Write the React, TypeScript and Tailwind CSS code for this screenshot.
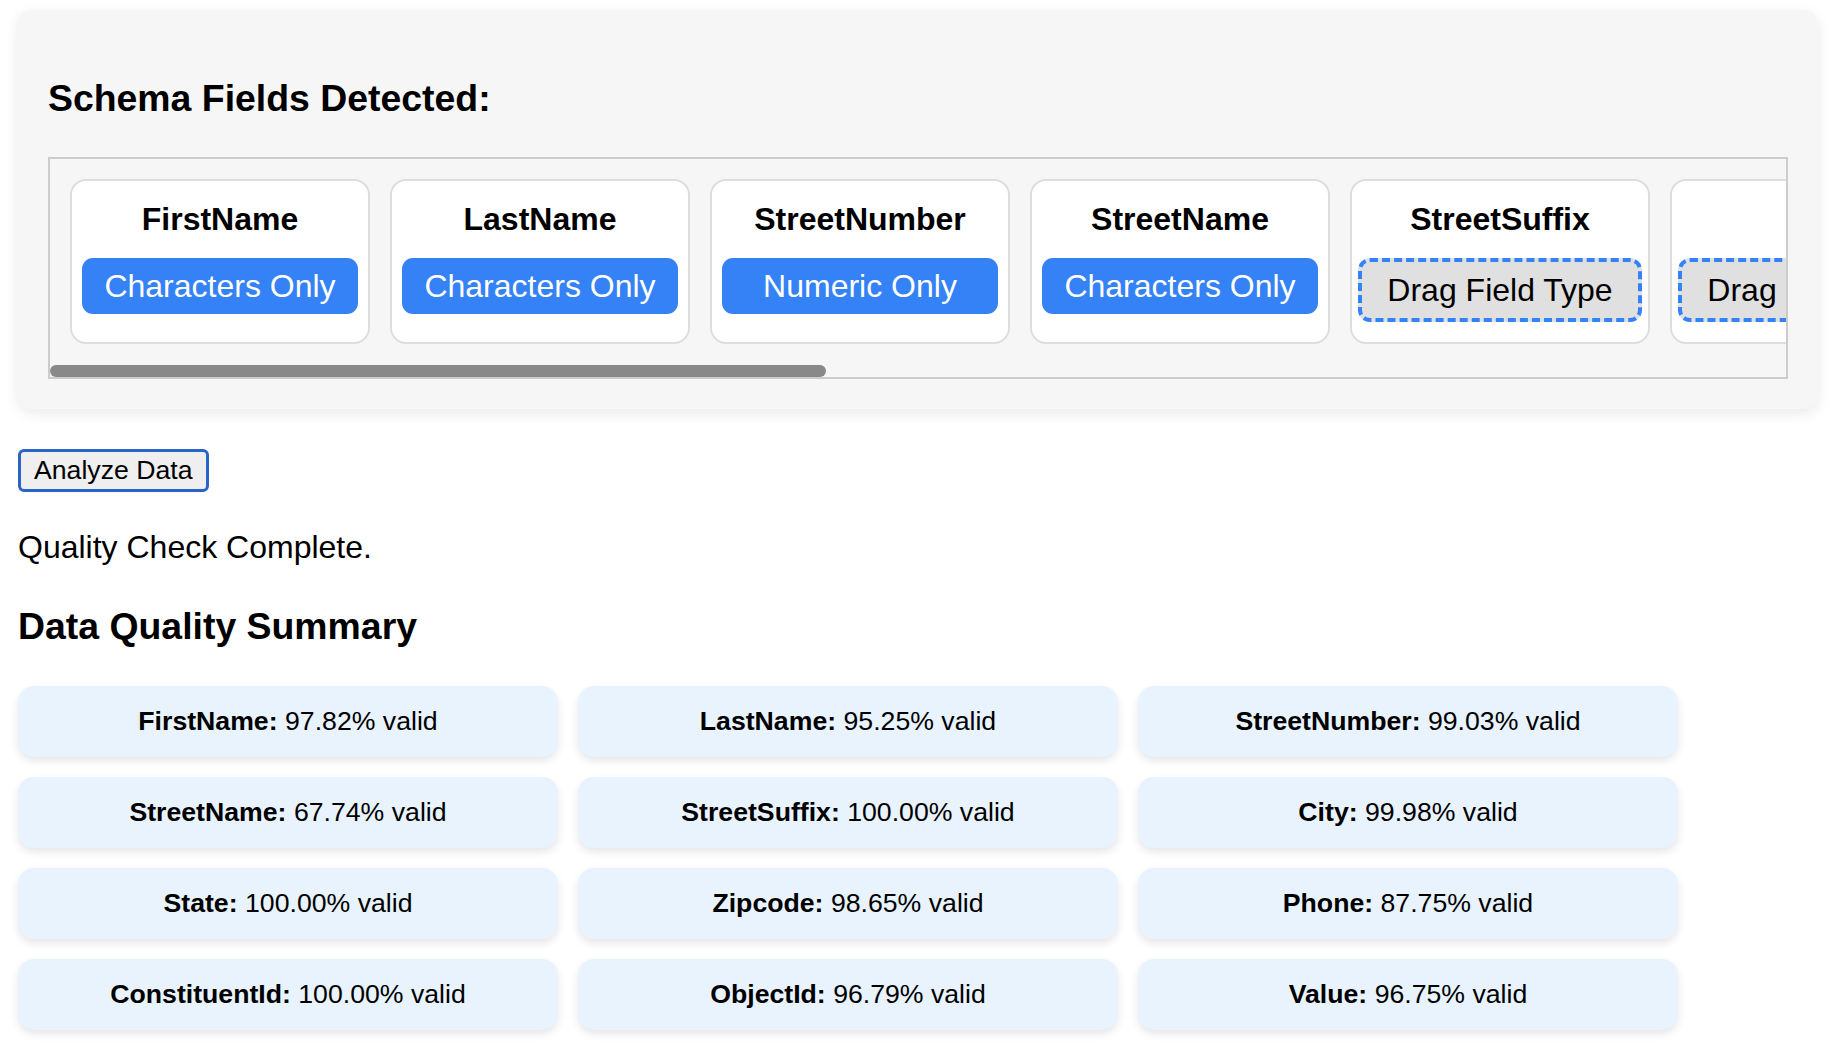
import React from "react";

const fields: { name: string; type: string | null }[] = [
  { name: "FirstName", type: "Characters Only" },
  { name: "LastName", type: "Characters Only" },
  { name: "StreetNumber", type: "Numeric Only" },
  { name: "StreetName", type: "Characters Only" },
  { name: "StreetSuffix", type: null },
  { name: "City", type: null },
  { name: "State", type: null },
  { name: "Zipcode", type: null },
  { name: "Phone", type: null },
  { name: "ConstituentId", type: null },
  { name: "ObjectId", type: null },
  { name: "Value", type: null },
];

const summary: [string, string][] = [
  ["FirstName", "97.82%"],
  ["LastName", "95.25%"],
  ["StreetNumber", "99.03%"],
  ["StreetName", "67.74%"],
  ["StreetSuffix", "100.00%"],
  ["City", "99.98%"],
  ["State", "100.00%"],
  ["Zipcode", "98.65%"],
  ["Phone", "87.75%"],
  ["ConstituentId", "100.00%"],
  ["ObjectId", "96.79%"],
  ["Value", "96.75%"],
];

export default function App() {
  return (
    <div
      className="min-h-screen bg-white text-black pt-[10px] pl-[18px] pr-[20px] pb-[20px] flex flex-col items-start"
      style={{ fontFamily: '"Liberation Sans", Arial, sans-serif' }}
    >
      <div className="w-full bg-[#f6f6f6] rounded-[14px] shadow-[0_4px_14px_rgba(0,0,0,0.09)] p-[30px]">
        <h3 className="mt-[37px] mb-[37px] text-[37.4px] font-bold leading-[normal]">
          Schema Fields Detected:
        </h3>
        <div className="border-2 border-[#cccccc] flex flex-col">
          <div className="overflow-hidden">
            <div className="flex gap-[20px] p-[20px] w-max">
              {fields.map((f) => (
                <div
                  key={f.name}
                  className="w-[300px] shrink-0 bg-white border-2 border-[#dddddd] rounded-[16px] pt-[20px] px-[10px] pb-[20px] flex flex-col"
                >
                  <div className="text-center text-[32px] font-bold leading-[normal] mb-[20px]">
                    {f.name}
                  </div>
                  {f.type ? (
                    <div className="h-[56px] bg-[#3581f6] text-white rounded-[11px] text-[32px] leading-[normal] flex items-center justify-center">
                      {f.type}
                    </div>
                  ) : (
                    <div className="-mx-[4px] h-[64px] bg-[#e0e0e0] border-[4px] border-dashed border-[#3581f6] rounded-[12px] text-[32px] leading-[normal] flex items-center justify-center whitespace-nowrap overflow-hidden">
                      Drag Field Type
                    </div>
                  )}
                </div>
              ))}
            </div>
          </div>
          <div className="h-[13px] flex items-start pt-[1px]">
            <div className="w-[776px] h-[12px] rounded-full bg-[#898989]" />
          </div>
        </div>
      </div>

      <button className="mt-[40px] bg-[#efefef] border-[3px] border-[#2a64c9] rounded-[6px] px-[13px] py-[3px] text-[26.67px] leading-[normal] text-black">
        Analyze Data
      </button>

      <p className="mt-[37px] text-[32px] leading-[normal]">Quality Check Complete.</p>

      <h3 className="mt-[39px] text-[37.4px] font-bold leading-[normal]">Data Quality Summary</h3>

      <div className="mt-[38px] grid grid-cols-[repeat(3,540px)] gap-[20px]">
        {summary.map(([k, v]) => (
          <div
            key={k}
            className="bg-[#e8f3fd] rounded-[16px] shadow-[0_4px_8px_rgba(0,0,0,0.1)] py-[20px] text-center text-[26.67px] leading-[normal]"
          >
            <span className="font-bold">{k}:</span> {v} valid
          </div>
        ))}
      </div>
    </div>
  );
}
